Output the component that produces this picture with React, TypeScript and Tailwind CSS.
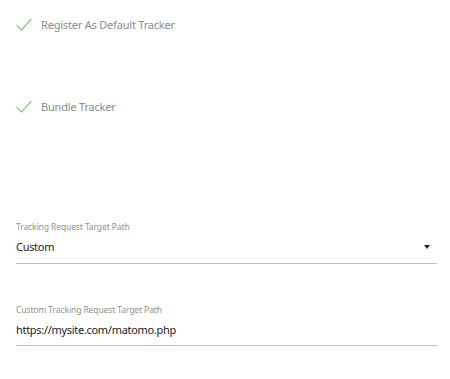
import React from "react";

function Check() {
  return (
    <svg width="16" height="14" viewBox="0 0 16 14" fill="none">
      <path d="M1 7.5 L5.5 12 L15 1.5" stroke="#86c98a" strokeWidth="1.2" strokeLinecap="round" strokeLinejoin="round" />
    </svg>
  );
}

export default function App() {
  return (
    <div className="w-[450px] h-[379px] bg-white pl-[16px] pr-[13px] pt-[15px]" style={{ fontFamily: '"Noto Sans", "Open Sans", sans-serif' }}>
      <div className="flex items-center h-[20px]">
        <Check />
        <span className="ml-[9px] text-[11px] tracking-[-0.2px] text-[#898b94]">Register As Default Tracker</span>
      </div>
      <div className="flex items-center h-[20px] mt-[62px]">
        <Check />
        <span className="ml-[9px] text-[11px] tracking-[-0.2px] text-[#898b94]">Bundle Tracker</span>
      </div>
      <div className="mt-[103px]">
        <div className="text-[8.5px] leading-[14px] h-[14px] tracking-[-0.1px] text-[#8f8f8f]">Tracking Request Target Path</div>
        <div className="flex items-center justify-between mt-[3px] h-[20px] leading-[20px]">
          <span className="text-[11px] tracking-[-0.3px] text-[#222]">Custom</span>
          <svg width="6" height="4" viewBox="0 0 6 4" className="mr-[7px]">
            <path d="M0 0 H6 L3 4 Z" fill="#222" />
          </svg>
        </div>
        <div className="mt-[6px] h-px bg-[#bdbdbd]" />
      </div>
      <div className="mt-[39px]">
        <div className="text-[8.5px] leading-[14px] h-[14px] tracking-[-0.1px] text-[#8f8f8f]">Custom Tracking Request Target Path</div>
        <div className="flex items-center mt-[3px] h-[20px] leading-[20px]">
          <span className="text-[11px] tracking-[-0.3px] text-[#222]">https://mysite.com/matomo.php</span>
        </div>
        <div className="mt-[5px] h-px bg-[#bdbdbd]" />
      </div>
    </div>
  );
}
